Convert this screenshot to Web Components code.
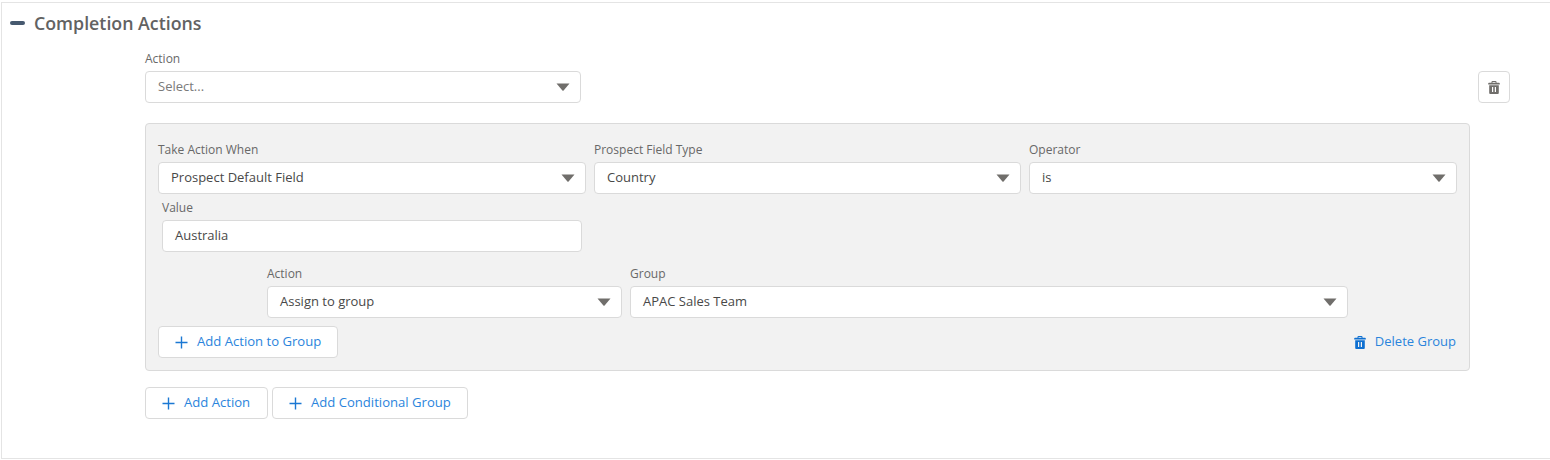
<!DOCTYPE html>
<html>
<head>
<meta charset="utf-8">
<title>Completion Actions</title>
<style>
  html, body { margin: 0; background: #fff; }
  body { font-family: "Open Sans", "Liberation Sans", sans-serif; font-size: 13px; color: #3e3e3c; }
</style>
</head>
<body>

<completion-section heading="Completion Actions">
  <div class="top" style="display:flex;justify-content:space-between;align-items:flex-end;width:1365px">
    <pick-field label="Action" value="Select..." placeholder style="width:436px"></pick-field>
    <icon-button></icon-button>
  </div>

  <action-group>
    <div style="display:grid;grid-template-columns:428px 427px 428px;gap:8px">
      <pick-field label="Take Action When" value="Prospect Default Field"></pick-field>
      <pick-field label="Prospect Field Type" value="Country"></pick-field>
      <pick-field label="Operator" value="is"></pick-field>
    </div>
    <pick-field label="Value" value="Australia" plain style="width:420px;margin:5px 0 0 4px"></pick-field>
    <div style="display:grid;grid-template-columns:355px 718px;gap:8px;margin:13px 0 0 109px">
      <pick-field label="Action" value="Assign to group"></pick-field>
      <pick-field label="Group" value="APAC Sales Team"></pick-field>
    </div>
    <div style="display:flex;justify-content:space-between;align-items:center;margin-top:8px">
      <add-button style="width:180px">Add Action to Group</add-button>
      <delete-link>Delete Group</delete-link>
    </div>
  </action-group>

  <div style="display:flex;gap:4px;margin-top:16px">
    <add-button style="width:123px">Add Action</add-button>
    <add-button style="width:196px">Add Conditional Group</add-button>
  </div>
</completion-section>

<script>
class CompletionSection extends HTMLElement {
  constructor() {
    super();
    this.attachShadow({ mode: "open" });
    this.shadowRoot.innerHTML = `
      <style>
        :host {
          display: block;
          box-sizing: border-box;
          height: 457px;
          margin: 2px 0 0 1px;
          border: 1px solid #e4e4e4;
          border-right: 0;
        }
        header {
          display: flex;
          align-items: center;
          gap: 9px;
          height: 41px;
          padding-left: 8px;
        }
        .minus { width: 15px; height: 4px; border-radius: 2px; background: #46596f; margin-bottom: 2px; }
        h2 { margin: -2px 0 0; font-size: 17.8px; line-height: 24px; font-weight: 600; color: #626262; }
        .body { padding: 6px 0 0 143px; }
      </style>
      <header><span class="minus"></span><h2>${this.getAttribute("heading")}</h2></header>
      <div class="body"><slot></slot></div>
    `;
  }
}

class PickField extends HTMLElement {
  constructor() {
    super();
    this.attachShadow({ mode: "open" });
    const arrow = this.hasAttribute("plain") ? "" : `
      <svg width="14" height="8" viewBox="0 0 14 8"><path d="M0.5 0.5h13L7.6 7.4a.8.8 0 0 1-1.2 0z" fill="#706e6b"/></svg>`;
    this.shadowRoot.innerHTML = `
      <style>
        :host { display: block; }
        label { display: block; height: 18px; line-height: 18px; margin-bottom: 3px; font-size: 12px; color: #686868; }
        .box {
          box-sizing: border-box;
          height: 32px;
          display: flex;
          align-items: center;
          justify-content: space-between;
          padding: 0 10px 0 12px;
          background: #fff;
          border: 1px solid #dadada;
          border-radius: 4px;
          font-size: 13px;
          color: #484848;
        }
        .box span { margin-top: -2px; }
        :host([placeholder]) .box { color: #7a7a7a; }
      </style>
      <label>${this.getAttribute("label")}</label>
      <div class="box"><span>${this.getAttribute("value")}</span>${arrow}</div>
    `;
  }
}

class IconButton extends HTMLElement {
  constructor() {
    super();
    this.attachShadow({ mode: "open" });
    this.shadowRoot.innerHTML = `
      <style>
        :host {
          box-sizing: border-box;
          display: flex;
          align-items: center;
          justify-content: center;
          width: 32px;
          height: 32px;
          background: #fff;
          border: 1px solid #dadada;
          border-radius: 4px;
        }
      </style>
      <svg width="12" height="13" viewBox="0 0 12 13">
        <path fill="#706e6b" d="M4.5 0h3a1 1 0 0 1 1 1v.8H11a.8.8 0 0 1 .8.8V3.4H.2V2.6A.8.8 0 0 1 1 1.8h2.5V1a1 1 0 0 1 1-1zm0 1v.8h3V1zM1.2 4.3h9.6v7.7a1 1 0 0 1-1 1H2.2a1 1 0 0 1-1-1zM4 6v5h1.2V6zm2.8 0v5H8V6z" fill-rule="evenodd"/>
      </svg>
    `;
  }
}

class ActionGroup extends HTMLElement {
  constructor() {
    super();
    this.attachShadow({ mode: "open" });
    this.shadowRoot.innerHTML = `
      <style>
        :host {
          display: block;
          box-sizing: border-box;
          width: 1325px;
          height: 248px;
          margin-top: 20px;
          padding: 17px 12px 0;
          background: #f2f2f2;
          border: 1px solid #dadada;
          border-radius: 4px;
        }
      </style>
      <slot></slot>
    `;
  }
}

class AddButton extends HTMLElement {
  constructor() {
    super();
    this.attachShadow({ mode: "open" });
    this.shadowRoot.innerHTML = `
      <style>
        :host {
          box-sizing: border-box;
          display: inline-flex;
          align-items: center;
          gap: 9px;
          height: 32px;
          padding: 0 0 0 16px;
          background: #fff;
          border: 1px solid #dadada;
          border-radius: 4px;
          font-size: 13.1px;
          color: #2a84dc;
        }
        span { margin-top: -2px; white-space: nowrap; }
      </style>
      <svg width="13" height="13" viewBox="0 0 13 13"><path d="M6.5 0.5v12M0.5 6.5h12" stroke="#1b78d3" stroke-width="1.4" fill="none"/></svg>
      <span><slot></slot></span>
    `;
  }
}

class DeleteLink extends HTMLElement {
  constructor() {
    super();
    this.attachShadow({ mode: "open" });
    this.shadowRoot.innerHTML = `
      <style>
        :host {
          display: inline-flex;
          align-items: center;
          gap: 9px;
          margin-right: 1px;
          font-size: 13px;
          color: #2a84dc;
        }
        span { margin-top: -2px; }
      </style>
      <svg width="12" height="13" viewBox="0 0 12 13">
        <path fill="#0f70d1" fill-rule="evenodd" d="M4.5 0h3a1 1 0 0 1 1 1v.8H11a.8.8 0 0 1 .8.8V3.4H.2V2.6A.8.8 0 0 1 1 1.8h2.5V1a1 1 0 0 1 1-1zm0 1v.8h3V1zM1.2 4.3h9.6v7.7a1 1 0 0 1-1 1H2.2a1 1 0 0 1-1-1zM4 6v5h1.2V6zm2.8 0v5H8V6z"/>
      </svg>
      <span><slot></slot></span>
    `;
  }
}

customElements.define("completion-section", CompletionSection);
customElements.define("pick-field", PickField);
customElements.define("icon-button", IconButton);
customElements.define("action-group", ActionGroup);
customElements.define("add-button", AddButton);
customElements.define("delete-link", DeleteLink);
</script>
</body>
</html>
